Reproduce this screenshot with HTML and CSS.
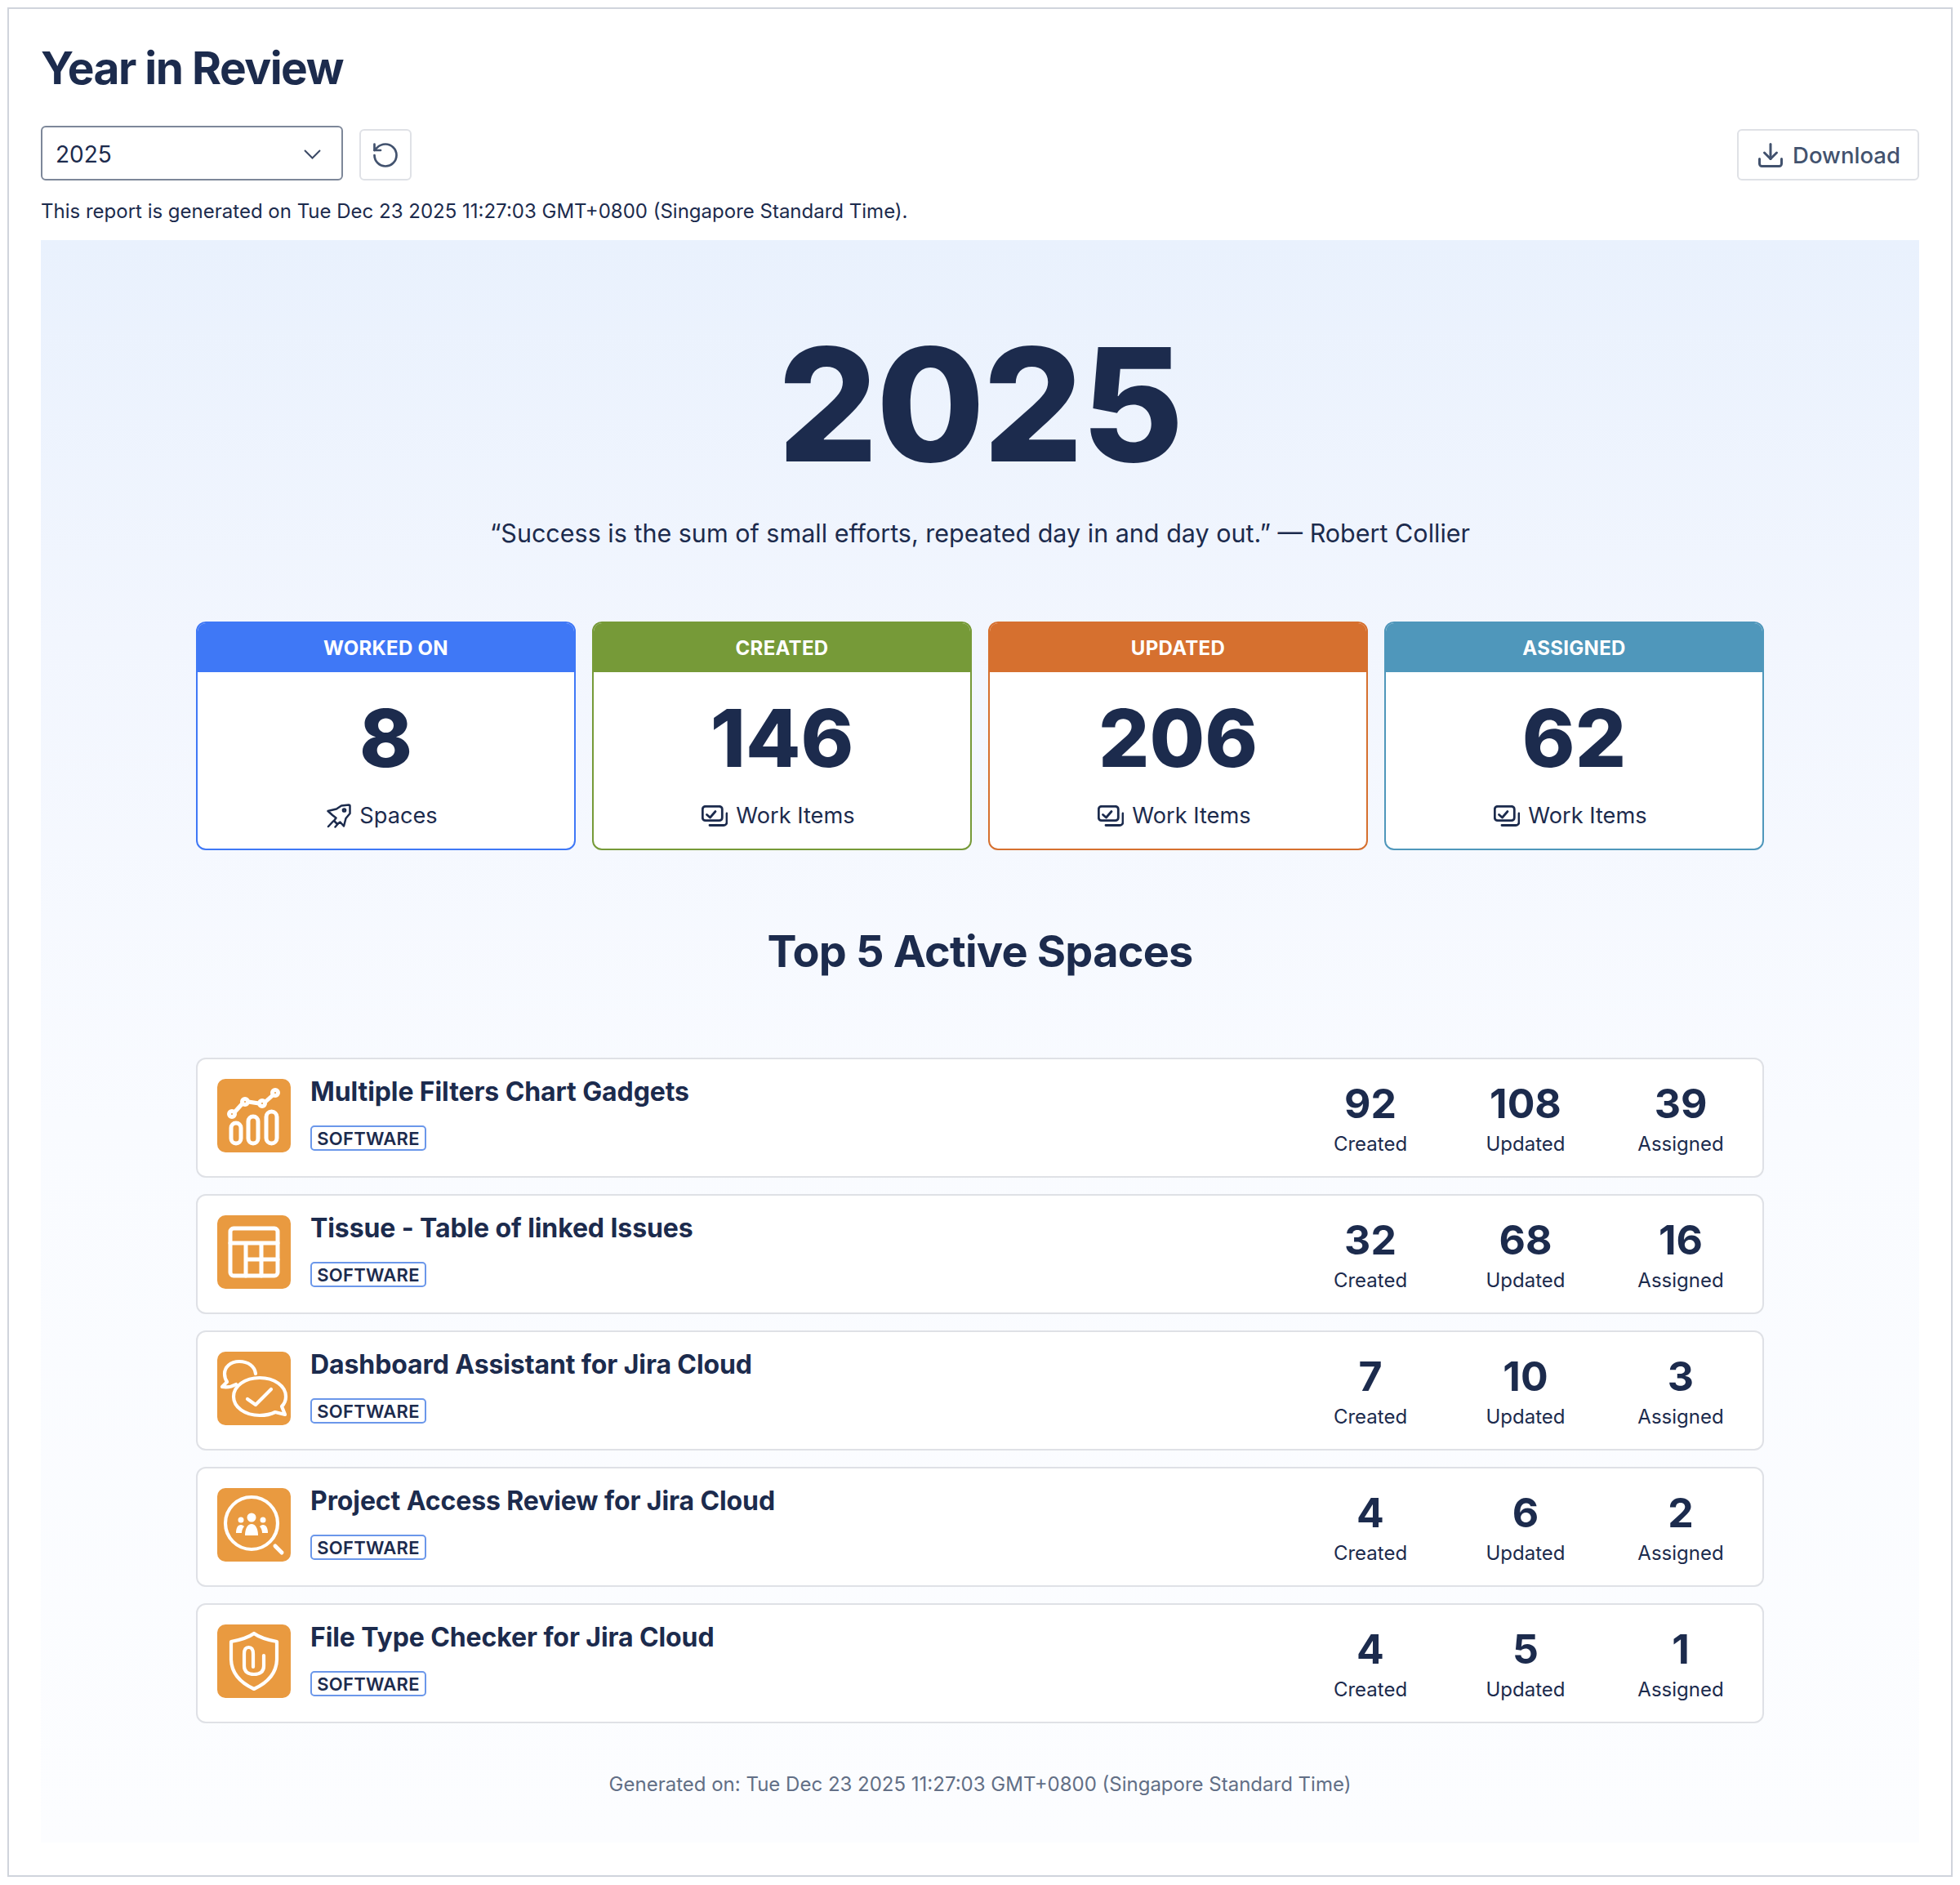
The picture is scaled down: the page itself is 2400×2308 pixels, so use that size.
FILE: index.html
```html
<!DOCTYPE html>
<html lang="en">
<head>
<meta charset="utf-8">
<title>Year in Review</title>
<link rel="stylesheet" href="styles.css">
</head>
<body>
<svg class="defs" width="0" height="0" aria-hidden="true">
  <symbol id="i-item" viewBox="0 0 32 26"><rect x="1.3" y="1.3" width="24" height="17.4" rx="3.5"/><path d="M6.5 11.5l4 3.5 6.5-7.5"/><path d="M31 10v10.5a4 4 0 0 1-4 4H10"/></symbol>
  <symbol id="i-rocket" viewBox="0 0 30 30"><path d="M1.500 9L12 6.500 18 2.500 27 1.500Q28.500 1.500 28.500 3V12L23.500 18 21 27.500 16.500 22.500 13 25 9 21 11.500 17.500 7 14z"/><path d="M2 28l6-6.500M10.500 28.500l3-3.500"/><circle cx="21.500" cy="8" r="1.600"/></symbol>
</svg>
<main class="frame">
  <h1 class="title">Year in Review</h1>
  <div class="toolbar">
    <div class="select"><span>2025</span>
      <svg class="chev" viewBox="0 0 21 12"><path d="M1 1l9.500 9.500L20 1"/></svg>
    </div>
    <button class="btn square" type="button">
      <svg class="ico-reset" viewBox="0 0 24 24"><path d="M3 12a9 9 0 1 0 9-9 9.750 9.750 0 0 0-6.740 2.740L3 8"/><path d="M3 3v5h5"/></svg>
    </button>
    <button class="btn download" type="button">
      <svg class="ico-dl" viewBox="0 0 24 24"><path d="M21 15v4a2 2 0 0 1-2 2H5a2 2 0 0 1-2-2v-4"/><path d="M7 10l5 5 5-5"/><path d="M12 15V3"/></svg>
      <span>Download</span>
    </button>
  </div>
  <p class="note">This report is generated on Tue Dec 23 2025 11:27:03 GMT+0800 (Singapore Standard Time).</p>

  <section class="panel">
    <div class="year">2025</div>
    <p class="quote">“Success is the sum of small efforts, repeated day in and day out.” — Robert Collier</p>

    <div class="cards">
      <article class="card blue"><header>WORKED ON</header><div class="num">8</div><div class="unit"><svg class="ico-rocket"><use href="#i-rocket"/></svg>Spaces</div></article>
      <article class="card green"><header>CREATED</header><div class="num">146</div><div class="unit"><svg class="ico-item"><use href="#i-item"/></svg>Work Items</div></article>
      <article class="card orange"><header>UPDATED</header><div class="num">206</div><div class="unit"><svg class="ico-item"><use href="#i-item"/></svg>Work Items</div></article>
      <article class="card teal"><header>ASSIGNED</header><div class="num">62</div><div class="unit"><svg class="ico-item"><use href="#i-item"/></svg>Work Items</div></article>
    </div>

    <h2 class="heading">Top 5 Active Spaces</h2>

    <div class="rows">
      <article class="row">
        <svg class="logo" viewBox="0 0 90 90"><rect class="bg" width="90" height="90" rx="10"/>
          <path class="ln thick" d="M21 41L31 30M38 28l13 2M59 28l9-8"/>
          <circle class="ln thick" cx="18" cy="43" r="3.500"/><circle class="ln thick" cx="34" cy="28" r="3.500"/><circle class="ln thick" cx="55" cy="30" r="3.500"/><circle class="ln thick" cx="71" cy="17" r="3.500"/>
          <rect class="ln thick" x="17" y="54" width="12" height="25" rx="6"/><rect class="ln thick" x="38" y="46" width="12" height="33" rx="6"/><rect class="ln thick" x="60" y="40" width="13" height="39" rx="6.500"/>
        </svg>
        <div class="info"><div class="name">Multiple Filters Chart Gadgets</div><span class="badge">SOFTWARE</span></div>
        <div class="stats">
          <div class="stat"><b>92</b><span>Created</span></div><div class="stat"><b>108</b><span>Updated</span></div><div class="stat"><b>39</b><span>Assigned</span></div>
        </div>
      </article>
      <article class="row">
        <svg class="logo" viewBox="0 0 90 90"><rect class="bg" width="90" height="90" rx="10"/>
          <rect class="ln thick" x="16" y="16" width="58" height="58" rx="4"/>
          <path class="ln thick" d="M16 34h58M35 34v40M54 34v40M35 54h39"/>
        </svg>
        <div class="info"><div class="name">Tissue - Table of linked Issues</div><span class="badge">SOFTWARE</span></div>
        <div class="stats">
          <div class="stat"><b>32</b><span>Created</span></div><div class="stat"><b>68</b><span>Updated</span></div><div class="stat"><b>16</b><span>Assigned</span></div>
        </div>
      </article>
      <article class="row">
        <svg class="logo" viewBox="0 0 90 90"><rect class="bg" width="90" height="90" rx="10"/>
          <path class="ln" d="M47 27C46 18 38 12 27 12 16 12 9 19 9 27c0 4 1 7 3 10l-6 6c7 1 12 0 17-3"/>
          <path class="ln" d="M52 32c18 0 32 10 32 23 0 5-2 9-5 12l4 10-12-3c-6 3-12 4-19 4-18 0-32-10-32-23s14-23 32-23z"/>
          <path class="ln" d="M37 58l10 7 19-19"/>
        </svg>
        <div class="info"><div class="name">Dashboard Assistant for Jira Cloud</div><span class="badge">SOFTWARE</span></div>
        <div class="stats">
          <div class="stat"><b>7</b><span>Created</span></div><div class="stat"><b>10</b><span>Updated</span></div><div class="stat"><b>3</b><span>Assigned</span></div>
        </div>
      </article>
      <article class="row">
        <svg class="logo" viewBox="0 0 90 90"><rect class="bg" width="90" height="90" rx="10"/>
          <circle class="ln" cx="42" cy="43" r="32"/><path class="ln thick" d="M71 71l8 8"/>
          <g class="wh"><circle cx="42" cy="36" r="5.500"/><circle cx="29" cy="39" r="3.500"/><circle cx="56" cy="39" r="3.500"/>
          <path d="M34 58c0-8 3-14 8-14s8 6 8 14z"/><path d="M23 55c0-6 2-10 6-10 2 0 3 1 4 2-2 2-3 5-3 8z"/><path d="M62 55c0-6-2-10-6-10-2 0-3 1-4 2 2 2 3 5 3 8z"/></g>
        </svg>
        <div class="info"><div class="name">Project Access Review for Jira Cloud</div><span class="badge">SOFTWARE</span></div>
        <div class="stats">
          <div class="stat"><b>4</b><span>Created</span></div><div class="stat"><b>6</b><span>Updated</span></div><div class="stat"><b>2</b><span>Assigned</span></div>
        </div>
      </article>
      <article class="row">
        <svg class="logo" viewBox="0 0 90 90"><rect class="bg" width="90" height="90" rx="10"/>
          <path class="ln" d="M45 11c7 5 17 8 28 10v21c0 18-13 30-28 37-15-7-28-19-28-37V21c11-2 21-5 28-10z"/>
          <path class="ln" d="M44 52V36c0-5-2-8-5.500-8S33 31 33 36v15c0 7 5 10 12 10s12-3 12-10V38"/>
        </svg>
        <div class="info"><div class="name">File Type Checker for Jira Cloud</div><span class="badge">SOFTWARE</span></div>
        <div class="stats">
          <div class="stat"><b>4</b><span>Created</span></div><div class="stat"><b>5</b><span>Updated</span></div><div class="stat"><b>1</b><span>Assigned</span></div>
        </div>
      </article>
    </div>

    <p class="footer">Generated on: Tue Dec 23 2025 11:27:03 GMT+0800 (Singapore Standard Time)</p>
  </section>
</main>
</body>
</html>
```
FILE: styles.css
```css
* { box-sizing: border-box; }
html, body { margin: 0; padding: 0; background: #fff; }
body { padding: 9px; font-family: Inter, "Liberation Sans", sans-serif; color: #1c2b4d; }
.defs { position: absolute; }
.frame { border: 2px solid #d0d4dc; padding: 40px 39px 40px; background: #fff; }
.title { margin: 0; font-size: 55px; line-height: 64px; font-weight: 700; letter-spacing: -1.500px; }
.toolbar { display: flex; align-items: flex-end; gap: 20px; margin-top: 39px; }
.select { width: 370px; height: 67px; border: 2px solid #7d8799; border-radius: 6px; display: flex; align-items: center; justify-content: space-between; padding: 2px 25px 0 16px; font-size: 28px; }
.chev { width: 21px; height: 12px; fill: none; stroke: #3c4a66; stroke-width: 2; }
.btn { height: 63px; border: 2px solid #dfe1e6; border-radius: 6px; background: #fff; display: flex; align-items: center; justify-content: center; font: inherit; color: #42526e; padding: 0; }
.square { width: 64px; }
.download { width: 223px; margin-left: auto; gap: 9px; font-size: 27.500px; font-weight: 500; }
.ico-reset { width: 36px; height: 36px; fill: none; stroke: #42526e; stroke-width: 1.800; stroke-linecap: round; stroke-linejoin: round; }
.ico-dl { width: 36px; height: 36px; fill: none; stroke: #42526e; stroke-width: 2; stroke-linecap: round; stroke-linejoin: round; }
.note { margin: 20px 0 17px; font-size: 24px; line-height: 36px; }
.panel { background: linear-gradient(180deg, #e9f1fd 0%, #f2f6fe 25%, #f9fbff 55%, #fcfdff 100%); padding: 81px 190px 53px; }
.year { text-align: center; font-size: 192px; line-height: 240px; font-weight: 800; letter-spacing: -2px; }
.quote { margin: 14px 0 84px; text-align: center; font-size: 30.500px; line-height: 48px; }
.cards { display: grid; grid-template-columns: repeat(4, 1fr); gap: 20px; }
.card { height: 280px; border: 2px solid; border-radius: 12px; background: #fff; overflow: hidden; text-align: center; }
.card header { height: 62px; margin: -2px -2px 0; color: #fff; font-size: 24px; font-weight: 700; line-height: 66px; letter-spacing: 0.300px; }
.num { font-size: 98px; line-height: 120px; font-weight: 800; margin-top: 21px; }
.unit { display: flex; align-items: center; justify-content: center; gap: 10px; font-size: 27.200px; line-height: 40px; margin-top: 15px; padding-right: 9px; }
.ico-item { width: 32px; height: 26px; fill: none; stroke: #1c2b4d; stroke-width: 2.800; stroke-linecap: round; stroke-linejoin: round; }
.ico-rocket { width: 30px; height: 30px; fill: none; stroke: #1c2b4d; stroke-width: 2.500; stroke-linecap: round; stroke-linejoin: round; }
.blue { border-color: #3f78f6; } .blue header { background: #3f78f6; }
.green { border-color: #769a38; } .green header { background: #769a38; }
.orange { border-color: #d6702f; } .orange header { background: #d6702f; }
.teal { border-color: #4f97bb; } .teal header { background: #4f97bb; }
.heading { margin: 88px 0 94px; text-align: center; font-size: 54px; line-height: 72px; font-weight: 700; letter-spacing: -0.800px; }
.rows { display: flex; flex-direction: column; gap: 20px; }
.row { height: 147px; border: 2px solid #dfe1e6; border-radius: 12px; background: #fff; padding: 24px 25px 24px 24px; display: flex; gap: 24px; }
.logo { width: 90px; height: 90px; flex: none; }
.bg { fill: #e99a40; }
.ln { fill: none; stroke: #fff; stroke-width: 4.200; stroke-linecap: round; stroke-linejoin: round; }
.thick { stroke-width: 5; }
.wh { fill: #fff; }
.info { flex: 1; display: flex; flex-direction: column; align-items: flex-start; }
.name { font-size: 32px; line-height: 40px; font-weight: 700; letter-spacing: -0.100px; margin-top: -4px; }
.badge { margin-top: 21px; height: 31px; width: 142px; border: 2px solid #6b97ea; border-radius: 5px; font-size: 22px; line-height: 29px; font-weight: 600; text-align: center; letter-spacing: 0.300px; }
.stats { display: flex; gap: 40px; }
.stat { width: 150px; display: flex; flex-direction: column; align-items: center; }
.stat b { font-size: 50px; line-height: 60px; font-weight: 700; }
.stat span { font-size: 24px; line-height: 32px; margin-top: 4px; }
.footer { margin: 57px 0 0; text-align: center; font-size: 24px; line-height: 36px; color: #626f86; }
```
